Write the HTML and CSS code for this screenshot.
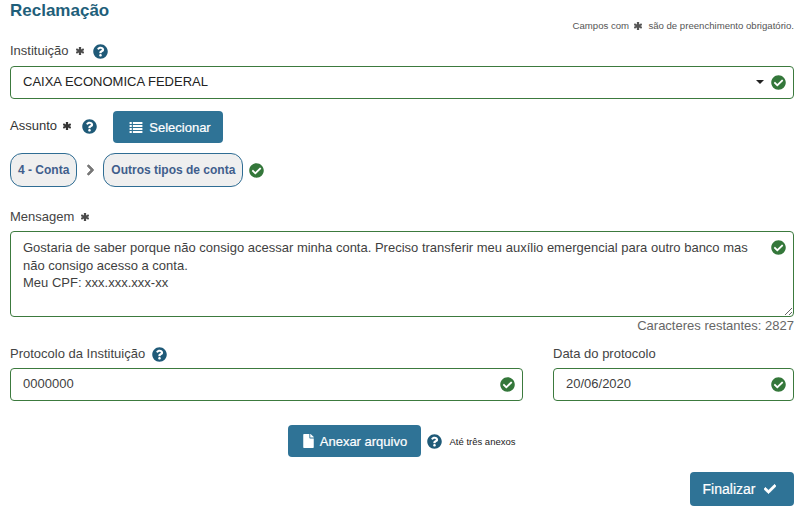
FILE: index.html
```html
<!DOCTYPE html>
<html lang="pt-BR">
<head>
<meta charset="utf-8">
<title>Reclamação</title>
<link rel="stylesheet" href="styles.css">
</head>
<body>
<svg class="defs" aria-hidden="true">
  <symbol id="i-check-circle" viewBox="0 0 512 512"><path d="M504 256c0 136.967-111.033 248-248 248S8 392.967 8 256 119.033 8 256 8s248 111.033 248 248zM227.314 387.314l184-184c6.248-6.248 6.248-16.379 0-22.627l-22.627-22.627c-6.248-6.249-16.379-6.249-22.628 0L216 308.118l-70.059-70.059c-6.248-6.248-16.379-6.248-22.628 0l-22.627 22.627c-6.248 6.248-6.248 16.379 0 22.627l104 104c6.249 6.249 16.379 6.249 22.628.001z"/></symbol>
  <symbol id="i-question" viewBox="0 0 512 512"><path d="M504 256c0 136.997-111.043 248-248 248S8 392.997 8 256C8 119.083 119.043 8 256 8s248 111.083 248 248zM262.655 90c-54.497 0-89.255 22.957-116.549 63.758-3.536 5.286-2.353 12.415 2.715 16.258l34.699 26.31c5.205 3.947 12.621 3.008 16.665-2.122 17.864-22.658 30.113-35.797 57.303-35.797 20.429 0 45.698 13.148 45.698 32.958 0 14.976-12.363 22.667-32.534 33.976C247.128 238.528 216 254.941 216 296v4c0 6.627 5.373 12 12 12h56c6.627 0 12-5.373 12-12v-1.333c0-28.462 83.186-29.647 83.186-106.667 0-58.002-60.165-102-116.531-102zM256 338c-25.365 0-46 20.635-46 46 0 25.364 20.635 46 46 46s46-20.636 46-46c0-25.365-20.635-46-46-46z"/></symbol>
  <symbol id="i-check" viewBox="0 0 512 512"><path d="M173.898 439.404l-166.4-166.4c-9.997-9.997-9.997-26.206 0-36.204l36.203-36.204c9.997-9.998 26.207-9.998 36.204 0L192 312.69 432.095 72.596c9.997-9.997 26.207-9.997 36.204 0l36.203 36.204c9.997 9.997 9.997 26.206 0 36.204l-294.4 294.401c-9.998 9.997-26.207 9.997-36.204-.001z"/></symbol>
  <symbol id="i-chevron" viewBox="0 0 320 512"><path d="M285.476 272.971L91.132 467.314c-9.373 9.373-24.569 9.373-33.941 0l-22.667-22.667c-9.357-9.357-9.375-24.522-.04-33.901L188.505 256 34.484 101.255c-9.335-9.379-9.317-24.544.04-33.901l22.667-22.667c9.373-9.373 24.569-9.373 33.941 0L285.475 239.03c9.373 9.372 9.373 24.568.001 33.941z"/></symbol>
  <symbol id="i-file" viewBox="0 0 384 512"><path d="M224 136V0H24C10.7 0 0 10.7 0 24v464c0 13.3 10.7 24 24 24h336c13.3 0 24-10.7 24-24V160H248c-13.2 0-24-10.8-24-24zm160-14.1v6.1H256V0h6.1c6.4 0 12.5 2.5 17 7l97.9 98c4.5 4.5 7 10.6 7 16.9z"/></symbol>
  <symbol id="i-list" viewBox="0 0 14 12"><path d="M0 0h2.4v2.2H0zM3.6 0H14v2.2H3.6zM0 3.3h2.4v2.2H0zM3.6 3.3H14v2.2H3.6zM0 6.6h2.4v2.2H0zM3.6 6.6H14v2.2H3.6zM0 9.8h2.4V12H0zM3.6 9.8H14V12H3.6z"/></symbol>
  <symbol id="i-asterisk" viewBox="0 0 12 12"><path d="M4.3 0h3.4v3.6l3.1-1.8 1.7 2.9L9.4 6l3.1 1.3-1.7 2.9-3.1-1.8V12H4.3V8.4l-3.1 1.8-1.7-2.9L2.6 6-.5 4.7l1.7-2.9 3.1 1.8z"/></symbol>
</svg>

<form class="page">
  <header class="head">
    <h1 class="title">Reclamação</h1>
    <p class="note">Campos com <svg class="star star-note"><use href="#i-asterisk"/></svg> são de preenchimento obrigatório.</p>
  </header>

  <div class="label-row label-inst">
    <label class="label" for="inst">Instituição</label>
    <svg class="star"><use href="#i-asterisk"/></svg>
    <svg class="help"><use href="#i-question"/></svg>
  </div>
  <div class="field">
    <select id="inst" class="control select">
      <option>CAIXA ECONOMICA FEDERAL</option>
    </select>
    <span class="caret"></span>
    <svg class="ok"><use href="#i-check-circle"/></svg>
  </div>

  <div class="subject">
    <span class="label label-dark">Assunto</span>
    <svg class="star star-dark"><use href="#i-asterisk"/></svg>
    <svg class="help"><use href="#i-question"/></svg>
    <button type="button" class="btn btn-select"><svg class="btn-icon list"><use href="#i-list"/></svg>Selecionar</button>
  </div>

  <div class="crumbs">
    <span class="chip">4 - Conta</span>
    <svg class="chevron"><use href="#i-chevron"/></svg>
    <span class="chip">Outros tipos de conta</span>
    <svg class="crumb-ok"><use href="#i-check-circle"/></svg>
  </div>

  <div class="label-row label-msg">
    <label class="label" for="msg">Mensagem</label>
    <svg class="star"><use href="#i-asterisk"/></svg>
  </div>
  <div class="field field-area">
    <textarea id="msg" class="control area">Gostaria de saber porque não consigo acessar minha conta. Preciso transferir meu auxílio emergencial para outro banco mas não consigo acesso a conta.
Meu CPF: xxx.xxx.xxx-xx</textarea>
    <svg class="ok ok-area"><use href="#i-check-circle"/></svg>
  </div>
  <p class="remaining">Caracteres restantes: 2827</p>

  <div class="cols">
    <div class="col col-main">
      <div class="label-row">
        <label class="label" for="prot">Protocolo da Instituição</label>
        <svg class="help"><use href="#i-question"/></svg>
      </div>
      <div class="field">
        <input id="prot" class="control" value="0000000">
        <svg class="ok"><use href="#i-check-circle"/></svg>
      </div>
    </div>
    <div class="col col-date">
      <div class="label-row">
        <label class="label" for="date">Data do protocolo</label>
      </div>
      <div class="field">
        <input id="date" class="control" value="20/06/2020">
        <svg class="ok"><use href="#i-check-circle"/></svg>
      </div>
    </div>
  </div>

  <div class="attach">
    <button type="button" class="btn btn-attach"><svg class="btn-icon file"><use href="#i-file"/></svg>Anexar arquivo</button>
    <svg class="help"><use href="#i-question"/></svg>
    <span class="attach-note">Até três anexos</span>
  </div>

  <div class="finish">
    <button type="button" class="btn btn-finish">Finalizar<svg class="btn-icon check"><use href="#i-check"/></svg></button>
  </div>
</form>
</body>
</html>
```
FILE: styles.css
```css
* { box-sizing: border-box; }

html, body { margin: 0; padding: 0; background: #fff; }

body {
  font-family: "Liberation Sans", Arial, sans-serif;
  font-size: 13px;
  color: #3f3f3f;
}

.defs { display: none; }

svg { display: block; flex: none; fill: currentColor; }

.page {
  width: 807px;
  height: 530px;
  padding: 0 13px 0 10px;
  overflow: hidden;
}

.head {
  display: flex;
  justify-content: space-between;
  align-items: flex-start;
  height: 44px;
}

.title {
  margin: 1px 0 0;
  font-size: 17px;
  line-height: 20px;
  font-weight: bold;
  color: #1f5f7a;
}

.note {
  display: flex;
  align-items: center;
  margin: 20px 0 0;
  font-size: 9.6px;
  line-height: 12px;
  color: #555;
  white-space: pre;
}

.star { width: 8px; height: 8px; color: #4a4a4a; margin-left: 7px; }
.star-note { margin: 0 4px 0 2px; color: #555; }
.star-dark { color: #333; }

.help { width: 15px; height: 15px; color: #1f5a78; }

.label { font-size: 13px; line-height: 16px; color: #444; }
.label-dark { color: #333; }

.label-row {
  display: flex;
  align-items: center;
  height: 16px;
  margin-bottom: 6px;
}
.label-inst { margin-bottom: 7px; margin-top: -1px; }
.label-inst .help { margin-left: 9px; }
.label-row > .label + .help { margin-left: 7px; }

.field { position: relative; }

.control {
  display: block;
  width: 100%;
  height: 33px;
  margin: 0;
  padding: 0 12px 2px;
  background: #fff;
  border: 1px solid #3c7a3e;
  border-radius: 4px;
  font-family: inherit;
  font-size: 13px;
  color: #3f3f3f;
  outline: none;
}

.select {
  appearance: none;
  -webkit-appearance: none;
  color: #222;
}

.caret {
  position: absolute;
  top: 14px;
  right: 30px;
  width: 0;
  height: 0;
  border-left: 4px solid transparent;
  border-right: 4px solid transparent;
  border-top: 4px solid #222;
}

.ok {
  position: absolute;
  top: 9px;
  right: 8px;
  width: 15px;
  height: 15px;
  color: #34773a;
}

.subject {
  display: flex;
  align-items: center;
  height: 32px;
  margin-top: 12px;
}
.subject .label,
.subject .star,
.subject .help { margin-bottom: 2px; }
.subject .star { margin-left: 6px; }
.subject .help { margin-left: 11px; }

.btn {
  display: flex;
  align-items: center;
  justify-content: center;
  margin: 0;
  border: 0;
  border-radius: 4px;
  background: #2f7396;
  color: #fff;
  font-family: inherit;
  font-size: 13px;
  padding: 0;
  -webkit-text-stroke: 0.2px #fff;
}

.btn-select { width: 110px; height: 32px; margin-left: 16px; padding-left: 4px; }
.btn-icon { color: #fff; }
.list { width: 14px; height: 11px; margin-right: 6px; }
.file { width: 11px; height: 14px; margin-right: 6px; }
.check { width: 12px; height: 12px; margin-left: 9px; stroke: currentColor; stroke-width: 30; }

.crumbs {
  display: flex;
  align-items: center;
  height: 34px;
  margin-top: 10px;
}

.chip {
  display: flex;
  align-items: center;
  height: 34px;
  padding: 0 7px;
  background: #efefef;
  border: 1px solid #2f6d94;
  border-radius: 12px;
  font-size: 12px;
  font-weight: bold;
  color: #3f5e8c;
}

.chevron { width: 9px; height: 12px; margin: 0 8px 0 9px; color: #777; stroke: currentColor; stroke-width: 40; }
.crumb-ok { width: 15px; height: 15px; margin-left: 6px; color: #34773a; }

.label-msg { margin-top: 22px; }

.area {
  height: 86px;
  padding: 7px 34px 7px 12px;
  line-height: 17.5px;
  resize: vertical;
  font-size: 13px;
}

.remaining {
  margin: 1px 0 0;
  text-align: right;
  font-size: 13px;
  line-height: 15px;
  color: #666;
}

.cols {
  display: flex;
  gap: 30px;
  margin-top: 13px;
}
.col-main { width: 513px; }
.col-date { flex: 1; }
.cols .label-row { height: 16px; margin-bottom: 6px; }

.attach {
  display: flex;
  align-items: center;
  justify-content: center;
  height: 32px;
  margin-top: 24px;
}
.btn-attach { width: 133px; height: 32px; }
.attach .help { margin-left: 6px; }
.attach-note { margin-left: 7px; font-size: 9.5px; color: #222; }

.finish {
  display: flex;
  justify-content: flex-end;
  margin-top: 15px;
}
.btn-finish { width: 104px; height: 34px; font-size: 14px; padding-right: 5px; }
```
